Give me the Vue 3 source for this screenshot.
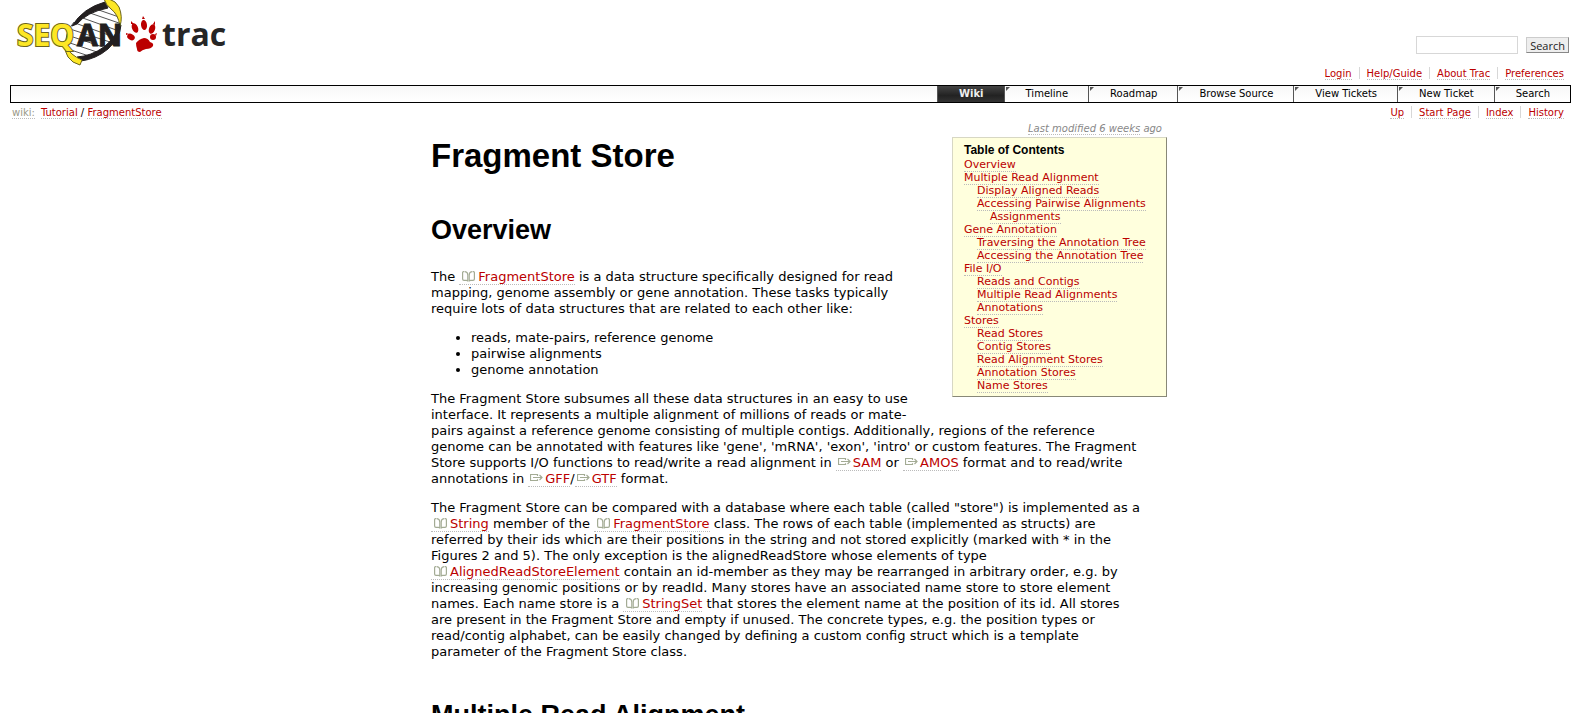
<script setup>
import { h } from 'vue'

const metaNav = ['Login', 'Help/Guide', 'About Trac', 'Preferences']
const mainNav = ['Wiki', 'Timeline', 'Roadmap', 'Browse Source', 'View Tickets', 'New Ticket', 'Search']
const contextNav = ['Up', 'Start Page', 'Index', 'History']
const toc = [
  [0, 'Overview'],
  [0, 'Multiple Read Alignment'],
  [1, 'Display Aligned Reads'],
  [1, 'Accessing Pairwise Alignments'],
  [2, 'Assignments'],
  [0, 'Gene Annotation'],
  [1, 'Traversing the Annotation Tree'],
  [1, 'Accessing the Annotation Tree'],
  [0, 'File I/O'],
  [1, 'Reads and Contigs'],
  [1, 'Multiple Read Alignments'],
  [1, 'Annotations'],
  [0, 'Stores'],
  [1, 'Read Stores'],
  [1, 'Contig Stores'],
  [1, 'Read Alignment Stores'],
  [1, 'Annotation Stores'],
  [1, 'Name Stores'],
]

const stroke = (d) => h('path', { d, fill: 'none', stroke: '#a3ab94', 'stroke-width': 1.2 })

const DocLink = (props, { slots }) =>
  h('a', { href: '#', class: 'ref' }, [
    h('svg', { class: 'doc-icon', width: 13, height: 11, viewBox: '0 0 13 11', 'aria-hidden': 'true' }, [
      stroke('M2.500 .6H1.500Q.6 .6 .6 1.500V8Q.6 9.400 2 9.400H4.500Q5.800 9.400 5.800 10.500V4Q5.800 1 3 .6'),
      stroke('M10.500 .6H11.500Q12.400 .6 12.400 1.500V8Q12.400 9.400 11 9.400H8.500Q7.200 9.400 7.200 10.500V4Q7.200 1 10 .6'),
    ]),
    slots.default(),
  ])

const ExtLink = (props, { slots }) =>
  h('a', { href: '#', class: 'ref' }, [
    h('svg', { class: 'ext-icon', width: 13, height: 8, viewBox: '0 0 13 8', 'aria-hidden': 'true' }, [
      stroke('M7.500 2V.5H.5V6.500H7.500V5.300M3 3.500H12M9.500 1L12 3.500L9.500 6'),
    ]),
    slots.default(),
  ])
</script>

<template>
  <div class="page">
    <header class="banner">
      <a href="#" class="logo" aria-label="SeqAn trac">
        <svg width="240" height="70" viewBox="0 0 240 70">
          <path d="M104 2Q82 8 70 26Q64 36 66 47L78 59Q100 55 112 41Q121 29 120 14Z" fill="#fff" />
          <g stroke="#555" stroke-width="1" fill="none">
            <path d="M93 8L119 17M87 12L119 23M80 17L119 31M75 23L117 38M70 29L113 43M67 35L106 48M67 42L100 53M68 49L92 57" />
            <path d="M74 22Q64 34 66 47" />
          </g>
          <path d="M105 2Q83 8 72 26L77 24Q87 12 108 8Z" fill="#231f20" stroke="#231f20" />
          <path d="M119 25Q116 37 104 47Q91 56 77 57L81 61Q96 59 108 49Q120 38 121 25Z" fill="#231f20" stroke="#231f20" />
          <path d="M104 -1Q106 5 111 9Q118 14 120 26Q123 17 119 7Q116 1 109 -1Z" fill="#fde725" stroke="#6b641d" />
          <path d="M66 46Q70 55 82 60L80 65Q72 63 68 57Q64 51 66 46Z" fill="#fde725" stroke="#6b641d" />
          <text x="17" y="46" class="seq">SEQ</text>
          <text x="77" y="46" class="an">AN</text>
          <g fill="#b00">
            <path d="M144 38Q148 38 150 42Q154 43 153 46Q151 49 146 49Q142 50 140 52Q137 52 137 49Q136 46 136 43Q139 39 144 38Z" />
            <ellipse cx="144" cy="25" rx="3" ry="5" transform="rotate(-7 144 25)" />
            <ellipse cx="135" cy="28" rx="3" ry="5" transform="rotate(-22 135 28)" />
            <ellipse cx="152" cy="29" rx="3" ry="5" transform="rotate(20 152 29)" />
            <ellipse cx="131" cy="37" rx="3" ry="4" transform="rotate(-60 131 37)" />
            <ellipse cx="153" cy="37" rx="3" ry="3" />
            <path d="M142 19L143 16L145 19ZM131 24L131 21L134 24ZM153 24L155 21L155 25ZM126 35L126 33L129 34ZM155 34L157 33L156 36Z" />
          </g>
          <text x="162" y="46" class="trac">trac</text>
        </svg>
      </a>
      <form class="search" @submit.prevent>
        <input type="text" aria-label="Search query" />
        <button type="submit">Search</button>
      </form>
    </header>

    <nav class="bar-list meta" aria-label="Account">
      <ul><li v-for="item in metaNav" :key="item"><a href="#">{{ item }}</a></li></ul>
    </nav>

    <nav class="mainnav" aria-label="Main">
      <ul>
        <li v-for="(item, i) in mainNav" :key="item" :class="{ active: i === 0 }"><a href="#">{{ item }}</a></li>
      </ul>
    </nav>

    <div class="context">
      <div class="path"><a href="#" class="first">wiki:</a><a href="#">Tutorial</a> / <a href="#">FragmentStore</a></div>
      <nav class="bar-list" aria-label="Page">
        <ul><li v-for="item in contextNav" :key="item"><a href="#">{{ item }}</a></li></ul>
      </nav>
    </div>

    <main class="wiki">
      <p class="modified"><a href="#">Last modified</a> <a href="#">6 weeks</a> ago</p>
      <aside class="toc">
        <h4>Table of Contents</h4>
        <ul>
          <li v-for="[level, label] in toc" :key="label" :class="'level' + level"><a href="#">{{ label }}</a></li>
        </ul>
      </aside>

      <h1>Fragment Store</h1>
      <h2>Overview</h2>
      <p>
        The <DocLink>FragmentStore</DocLink> is a data structure specifically designed for read<br />
        mapping, genome assembly or gene annotation. These tasks typically<br />
        require lots of data structures that are related to each other like:
      </p>
      <ul class="points">
        <li>reads, mate-pairs, reference genome</li>
        <li>pairwise alignments</li>
        <li>genome annotation</li>
      </ul>
      <p>
        The Fragment Store subsumes all these data structures in an easy to use<br />
        interface. It represents a multiple alignment of millions of reads or mate-<br />
        pairs against a reference genome consisting of multiple contigs. Additionally, regions of the reference<br />
        genome can be annotated with features like 'gene', 'mRNA', 'exon', 'intro' or custom features. The Fragment<br />
        Store supports I/O functions to read/write a read alignment in
        <ExtLink>SAM</ExtLink> or <ExtLink>AMOS</ExtLink> format and to read/write<br />
        annotations in <ExtLink>GFF</ExtLink>/<ExtLink>GTF</ExtLink> format.
      </p>
      <p>
        The Fragment Store can be compared with a database where each table (called "store") is implemented as a<br />
        <DocLink>String</DocLink> member of the <DocLink>FragmentStore</DocLink> class. The rows of each table
        (implemented as structs) are<br />
        referred by their ids which are their positions in the string and not stored explicitly (marked with * in the<br />
        Figures 2 and 5). The only exception is the alignedReadStore whose elements of type<br />
        <DocLink>AlignedReadStoreElement</DocLink> contain an id-member as they may be rearranged in arbitrary
        order, e.g. by<br />
        increasing genomic positions or by readId. Many stores have an associated name store to store element<br />
        names. Each name store is a <DocLink>StringSet</DocLink> that stores the element name at the position of its
        id. All stores<br />
        are present in the Fragment Store and empty if unused. The concrete types, e.g. the position types or<br />
        read/contig alphabet, can be easily changed by defining a custom config struct which is a template<br />
        parameter of the Fragment Store class.
      </p>
      <h2>Multiple Read Alignment</h2>
    </main>
  </div>
</template>

<style>
html { overflow: hidden; }
body { margin: 0; background: #fff; }
</style>

<style scoped>
.page {
  padding: 0 10px;
  color: #000;
  font: 13px/16px Verdana, "DejaVu Sans", sans-serif;
}
ul { list-style: none; margin: 0; padding: 0; }
a, .wiki :deep(a) {
  color: #b00;
  text-decoration: none;
  border-bottom: 1px dotted #bbb;
}
.banner { display: flex; justify-content: space-between; height: 66px; }
.logo { border: 0; margin-left: -10px; }
.logo svg { display: block; }
.seq, .an { font: bold 30px "Open Sans", sans-serif; }
.seq { fill: #fde725; stroke: #6b641d; stroke-width: 2px; paint-order: stroke; }
.an { fill: #231f20; stroke: #231f20; stroke-width: 1px; }
.trac { font: bold 32px "Open Sans", sans-serif; fill: #262626; }
.search { display: flex; gap: 8px; align-items: center; height: 18px; margin: 36px 2px 0 0; }
.search input { box-sizing: border-box; width: 102px; height: 18px; border: 1px solid #d7d7d7; padding: 0 3px; }
.search button {
  box-sizing: border-box;
  height: 16px;
  padding: 0 3px;
  color: #222;
  background: #eee;
  border: 1px solid;
  border-color: #ccc #888 #888 #ccc;
  font: 11px/13px "Open Sans", sans-serif;
}
.bar-list { font-size: 10px; line-height: 13px; }
.bar-list ul { display: flex; justify-content: flex-end; }
.bar-list li { padding: 0 7px; border-left: 1px solid #d7d7d7; height: 12px; }
.bar-list li:first-child { border: 0; }
.meta { padding: 1px 0 6px; height: 12px; }
.mainnav {
  border: 1px solid #000;
  background: linear-gradient(#f7f7f7, #fff);
  font-size: 10px;
  line-height: 16px;
}
.mainnav ul { display: flex; justify-content: flex-end; }
.mainnav li { position: relative; border-left: 1px solid #555; }
.mainnav li::before {
  content: "";
  position: absolute;
  left: 1px;
  top: 1px;
  border: 2px solid #555;
  border-right-color: transparent;
  border-bottom-color: transparent;
}
.mainnav a { display: block; padding: 0 20px 0 21px; color: #000; border: 0; }
.mainnav .active { border-color: #555; }
.mainnav .active::before { display: none; }
.mainnav .active a { color: #eee; font-weight: bold; background: linear-gradient(#444, #222 60%, #333); }
.context { display: flex; justify-content: space-between; height: 18px; padding-top: 3px; box-sizing: border-box; }
.path { font-size: 10px; line-height: 13px; padding-left: 2px; }
.path .first { color: #998; margin-right: 6px; }
.wiki { max-width: 736px; margin: 0 auto; padding-left: 17px; }
.wiki .modified { margin: 0 5px 0 0; text-align: right; font-size: 10px; line-height: 16px; font-style: italic; color: #888; }
.modified a { color: #888; }
.toc {
  float: right;
  box-sizing: border-box;
  width: 215px;
  margin: 0 0 22px 22px;
  padding: 5px 11px 4px;
  background: #ffd;
  border: 1px solid;
  border-color: #d7d7c4 #887 #887 #d7d7c4;
  font-size: 11px;
  line-height: 13px;
  white-space: nowrap;
}
.toc h4 { margin: 0; font: bold 12px/15px Arial, "Liberation Sans", sans-serif; }
.toc .level1 { padding-left: 13px; }
.toc .level2 { padding-left: 26px; }
h1, h2 { font-family: Arial, "Liberation Sans", sans-serif; font-weight: bold; margin: 0; }
h1 { font-size: 33px; line-height: 38px; }
h2 { font-size: 27px; line-height: 32px; margin: 39px 0 23px; }
.wiki p { margin: 0 0 13px; }
.points { list-style: disc; margin-bottom: 13px; padding-left: 40px; }
.wiki :deep(.ref) { white-space: nowrap; }
.wiki :deep(.doc-icon) { margin: 0 3px 0 3px; vertical-align: -1px; }
.wiki :deep(.ext-icon) { margin: 0 2px 0 2px; vertical-align: 1px; }
</style>
